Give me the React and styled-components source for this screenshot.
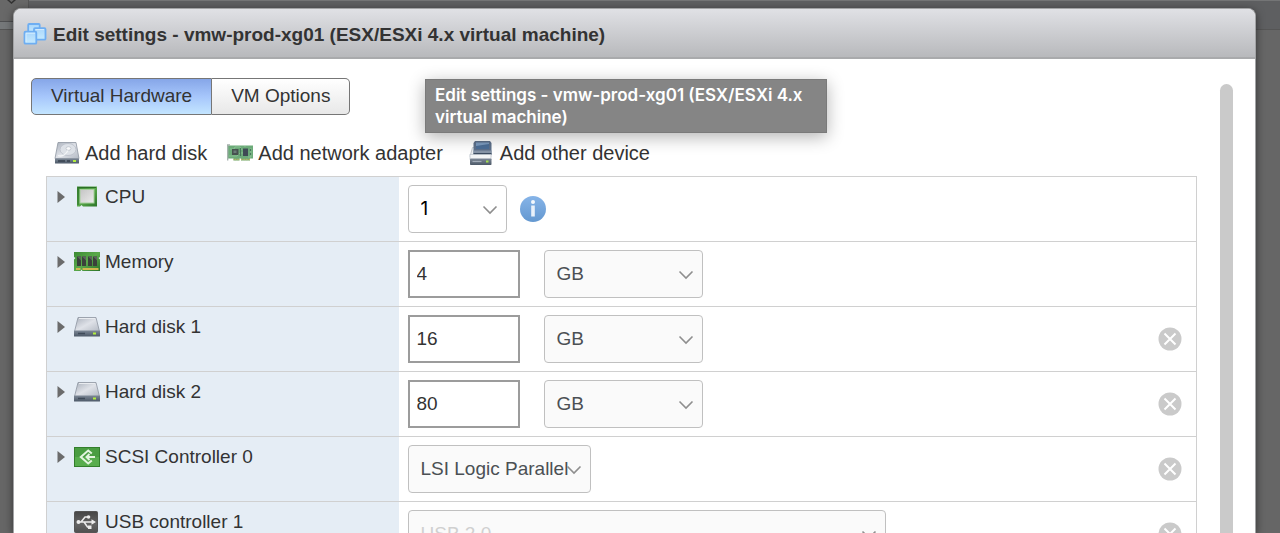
import React, { useState } from 'react'
import styled, { createGlobalStyle } from 'styled-components'

const devices = [
  { id: 'cpu', name: 'CPU', icon: 'cpu', expandable: true, kind: 'cpu' },
  { id: 'memory', name: 'Memory', icon: 'memory', expandable: true, kind: 'size', size: '4' },
  { id: 'disk1', name: 'Hard disk 1', icon: 'disk', expandable: true, kind: 'size', size: '16', removable: true },
  { id: 'disk2', name: 'Hard disk 2', icon: 'disk', expandable: true, kind: 'size', size: '80', removable: true },
  { id: 'scsi', name: 'SCSI Controller 0', icon: 'scsi', expandable: true, kind: 'scsi', removable: true },
  { id: 'usb', name: 'USB controller 1', icon: 'usb', expandable: false, kind: 'usb', removable: true },
]

const title = 'Edit settings - vmw-prod-xg01 (ESX/ESXi 4.x virtual machine)'

function Gradients() {
  return (
    <HiddenSvg aria-hidden='true'>
      <defs>
        <linearGradient id='silver' x1='0' y1='0' x2='1' y2='1'>
          <stop offset='0' stopColor='#a9b0bb' />
          <stop offset='0.5' stopColor='#dfe2e8' />
          <stop offset='1' stopColor='#b4bac4' />
        </linearGradient>
        <linearGradient id='steel' x1='0' y1='0' x2='0' y2='1'>
          <stop offset='0' stopColor='#7d8896' />
          <stop offset='1' stopColor='#4d5968' />
        </linearGradient>
        <linearGradient id='green' x1='0' y1='0' x2='1' y2='1'>
          <stop offset='0' stopColor='#3c8a33' />
          <stop offset='0.5' stopColor='#5aa94b' />
          <stop offset='1' stopColor='#2c7428' />
        </linearGradient>
        <linearGradient id='blue' x1='0' y1='0' x2='0' y2='1'>
          <stop offset='0' stopColor='#86b4e8' />
          <stop offset='1' stopColor='#6498d0' />
        </linearGradient>
        <linearGradient id='pane' x1='0' y1='0' x2='0' y2='1'>
          <stop offset='0' stopColor='#a9d6fb' />
          <stop offset='1' stopColor='#c6eafe' />
        </linearGradient>
        <linearGradient id='chip' x1='0' y1='0' x2='1' y2='1'>
          <stop offset='0' stopColor='#c4c4c4' />
          <stop offset='1' stopColor='#ececec' />
        </linearGradient>
        <linearGradient id='dark' x1='0' y1='0' x2='0' y2='1'>
          <stop offset='0' stopColor='#454545' />
          <stop offset='0.6' stopColor='#646464' />
          <stop offset='1' stopColor='#505050' />
        </linearGradient>
      </defs>
    </HiddenSvg>
  )
}

function VmIcon() {
  return (
    <svg width='24' height='24' viewBox='0 0 24 24' aria-hidden='true'>
      <g fill='url(#pane)' stroke='#6eaef2' strokeWidth='1.8'>
        <rect x='5.2' y='2' width='11.5' height='10' rx='1' />
        <rect x='11' y='6.2' width='11.5' height='11.5' rx='1' />
        <rect x='1.5' y='9.7' width='11.8' height='12' rx='1' />
      </g>
      <path d='M12.500 7.600h8.500M3 11.200h9M3 11.200v9' stroke='#dff2ff' strokeWidth='0.8' fill='none' />
    </svg>
  )
}

function AddDiskIcon() {
  return (
    <svg width='26' height='24' viewBox='0 0 26 24' aria-hidden='true'>
      <path d='M4 1.5h18l3 16H1z' fill='url(#silver)' stroke='#8e96a1' strokeWidth='0.8' />
      <ellipse cx='14' cy='8.500' rx='8' ry='6' fill='#dde1e7' stroke='#b7bdc6' strokeWidth='0.8' />
      <ellipse cx='14.5' cy='7.500' rx='2.5' ry='1.8' fill='#f9fafb' stroke='#b7bdc6' strokeWidth='0.7' />
      <path d='M4 14.500c4 1.500 7 0 10-5' stroke='#f4f6f8' strokeWidth='1.3' fill='none' />
      <rect x='1' y='17.5' width='24' height='5' rx='0.6' fill='url(#steel)' />
      <path d='M4 20h7M13 20h3' stroke='#37424f' strokeWidth='1.6' />
      <rect x='19' y='19' width='3' height='2' fill='#b2ee3d' />
    </svg>
  )
}

function NetworkIcon() {
  return (
    <svg width='26' height='24' viewBox='0 0 26 24' aria-hidden='true'>
      <path d='M1 4.5h25v13h-3v2h-9v-2h-1.500v2h-6v-2H1z' fill='#6cab79' />
      <path d='M0 4h3M0.700 4v15.500' stroke='#a4b0ab' strokeWidth='1.3' fill='none' />
      <path d='M3 8h4l1-2h5l2 3M2 15h8l3 -3h3M18 6v-1M21 16h3V7' stroke='#93c79b' strokeWidth='0.8' fill='none' />
      <rect x='5' y='8' width='6.500' height='6' fill='#46524f' />
      <rect x='6.500' y='9.500' width='3' height='2.500' fill='#6c7a79' />
      <rect x='16' y='7.500' width='5' height='7.500' fill='#3f4b55' />
      <path d='M13.500 7v8M23.500 8v2M23.500 12v2' stroke='#47775a' strokeWidth='1.2' />
      <path d='M6.500 18.500h6M14 18.500h9' stroke='#bdb765' strokeWidth='1.6' strokeDasharray='1 0.600' />
    </svg>
  )
}

function OtherDeviceIcon() {
  return (
    <svg width='32' height='26' viewBox='0 0 32 26' aria-hidden='true'>
      <path d='M9.500 7.500h16l2.500 9H7z' fill='#edf0f2' stroke='#b5bbc3' strokeWidth='0.800' />
      <path d='M12 1h15l1.500 2v12h-18V3z' fill='#5d708a' />
      <path d='M13 2.500h13v6.500h-13z' fill='#7c9bbf' />
      <path d='M13 6l13 -2v5h-13z' fill='#4b6d96' />
      <path d='M10.500 10.500h18V13h-18z' fill='#8795a7' />
      <path d='M10.500 13h18v1.500h-18z' fill='#3d4d61' />
      <rect x='7' y='14.500' width='21' height='5' fill='#f3f5f6' stroke='#bcc3cb' strokeWidth='0.700' />
      <rect x='7' y='18.500' width='21.500' height='6.500' rx='0.800' fill='url(#steel)' />
      <path d='M9.500 21.500h9' stroke='#a2acb8' strokeWidth='1.200' />
      <rect x='23' y='20.500' width='2.500' height='2' fill='#a4df4f' />
    </svg>
  )
}

const deviceIcons = {
  cpu: (
    <>
      <path d='M3 1.5h20v20h-14l-1.500-1.500-1.500 1.500H3z' fill='url(#green)' />
      <path d='M4 20V2.500h18' stroke='#2b6f26' fill='none' />
      <rect x='6' y='4.500' width='14' height='13.500' fill='url(#chip)' stroke='#a5cf9b' />
    </>
  ),
  memory: (
    <>
      <path
        d='M0 2h26v5l-1.500 1 1.500 1.500v11.500H8.500l-1-1.500-1 1.500H0v-11.500l1.500-1.500L0 7z'
        fill='url(#green)'
      />
      <path d='M3 6.500h4v9.500H3zM8 6.500h4v9.500H8zM14 6.500h4v9.500h-4zM19 6.500h4v9.500h-4z' fill='#3a413b' />
      <path d='M3 6.500l4 4v-4zM8 6.500l4 4v-4zM14 6.500l4 4v-4zM19 6.500l4 4v-4z' fill='#5c625d' />
      <path d='M2 19h4.500M8.500 19h16' stroke='#d0b650' strokeWidth='1.800' />
    </>
  ),
  disk: (
    <>
      <path d='M4 2.500h18l3.500 14H0.500z' fill='url(#silver)' stroke='#8e96a1' strokeWidth='0.800' />
      <path d='M5 3.500h16' stroke='#e9ecf0' />
      <rect x='0' y='15.500' width='26' height='6' rx='0.600' fill='url(#steel)' />
      <path d='M4 18.500h7' stroke='#3f4b59' strokeWidth='1.500' />
      <rect x='19' y='17.500' width='3' height='2' fill='#b2ee3d' />
    </>
  ),
  scsi: (
    <>
      <rect x='0.500' y='2.500' width='25' height='19' fill='#58ad4d' stroke='#337f2c' />
      <path d='M1 3h24v9H1z' fill='#4a9d41' />
      <path
        d='M17.800 8.500L14.200 5.500 6.800 12l7.400 6.500 3.600-3M21 12h-8M15.500 9L12.500 12l3 3'
        fill='none'
        stroke='#e4f4df'
        strokeWidth='2'
      />
    </>
  ),
  usb: (
    <>
      <rect x='0.500' y='1.500' width='23' height='21' rx='1' fill='url(#dark)' stroke='#555' />
      <path
        d='M4 12h15M7 12l4-5h3.500M10 12l3.500 5h3'
        fill='none'
        stroke='#ececec'
        strokeWidth='1.500'
      />
      <circle cx='4.500' cy='12' r='2' fill='#ececec' />
      <circle cx='14.500' cy='7' r='1.800' fill='#ececec' />
      <path d='M17.500 9.200L22 12l-4.500 2.800zM14 15.500h3.500V19H14z' fill='#ececec' />
    </>
  ),
}

function InfoIcon() {
  return (
    <svg width='28' height='28' viewBox='0 0 28 28' aria-hidden='true'>
      <circle cx='14' cy='14' r='13' fill='url(#blue)' />
      <circle cx='14' cy='7' r='2' fill='#f4f8fd' />
      <rect x='12.200' y='10.500' width='3.600' height='11' fill='#e9f1fa' />
    </svg>
  )
}

function SelectBox({ options, ...props }) {
  return (
    <SelectWrap $width={props.$width}>
      <Select {...props}>
        {options.map((option) => (
          <option key={option}>{option}</option>
        ))}
      </Select>
      <Chevron viewBox='0 0 16 10' aria-hidden='true'>
        <path d='M1.500 1.500L8 8l6.500-6.500' fill='none' stroke='#8e8e8e' strokeWidth='1.600' />
      </Chevron>
    </SelectWrap>
  )
}

function DeviceControls({ device }) {
  if (device.kind === 'cpu') {
    return (
      <>
        <SelectBox $width='99px' $plain aria-label='CPU' options={['1', '2', '4', '8']} />
        <InfoButton type='button' aria-label='CPU information'>
          <InfoIcon />
        </InfoButton>
      </>
    )
  }
  if (device.kind === 'size') {
    return (
      <>
        <SizeInput type='text' aria-label={device.name} defaultValue={device.size} />
        <SelectBox
          $width='159px'
          aria-label={`${device.name} unit`}
          defaultValue='GB'
          options={['MB', 'GB', 'TB']}
        />
      </>
    )
  }
  if (device.kind === 'scsi') {
    return (
      <SelectBox
        $width='183px'
        aria-label={device.name}
        options={['LSI Logic Parallel', 'LSI Logic SAS', 'BusLogic Parallel']}
      />
    )
  }
  return <SelectBox $width='478px' disabled aria-label={device.name} options={['USB 2.0']} />
}

export default function App() {
  const [tab, setTab] = useState('hardware')
  return (
    <Backdrop>
      <GlobalStyle />
      <Gradients />
      <BackdropCorner>
        <svg width='12' height='6' viewBox='0 0 12 6' aria-hidden='true'>
          <path d='M1-1l4.500 4L10-1' fill='none' stroke='#333' strokeWidth='1.500' />
        </svg>
      </BackdropCorner>
      <Dialog role='dialog' aria-labelledby='dialog-title'>
        <Header>
          <VmIcon />
          <Title id='dialog-title'>{title}</Title>
          <Tooltip role='tooltip'>{title}</Tooltip>
        </Header>
        <Body>
          <Content>
            <Tabs role='tablist'>
              <Tab
                type='button'
                role='tab'
                aria-selected={tab === 'hardware'}
                $active={tab === 'hardware'}
                onClick={() => setTab('hardware')}
              >
                Virtual Hardware
              </Tab>
              <Tab
                type='button'
                role='tab'
                aria-selected={tab === 'options'}
                $active={tab === 'options'}
                onClick={() => setTab('options')}
              >
                VM Options
              </Tab>
            </Tabs>
            <Toolbar>
              <ToolButton type='button'>
                <AddDiskIcon />
                Add hard disk
              </ToolButton>
              <ToolButton type='button'>
                <NetworkIcon />
                Add network adapter
              </ToolButton>
              <ToolButton type='button'>
                <OtherDeviceIcon />
                Add other device
              </ToolButton>
            </Toolbar>
            <DeviceTable>
              <tbody>
                {devices.map((device) => (
                  <tr key={device.id}>
                    <NameCell scope='row'>
                      <Name>
                        <Expander
                          type='button'
                          aria-label={`Expand ${device.name}`}
                          $hidden={!device.expandable}
                        >
                          <svg width='8' height='12' viewBox='0 0 8 12' aria-hidden='true'>
                            <path d='M0.500 0L8 6l-7.500 6z' fill='#6b6b6b' />
                          </svg>
                        </Expander>
                        <svg width='26' height='24' viewBox='0 0 26 24' aria-hidden='true'>
                          {deviceIcons[device.icon]}
                        </svg>
                        {device.name}
                      </Name>
                    </NameCell>
                    <ValueCell>
                      <Controls>
                        <DeviceControls device={device} />
                        {device.removable && (
                          <RemoveButton type='button' aria-label={`Remove ${device.name}`}>
                            <svg width='24' height='24' viewBox='0 0 24 24' aria-hidden='true'>
                              <circle cx='12' cy='12' r='11.500' fill='#cacaca' />
                              <path d='M6.500 6.500l11 11M17.500 6.500l-11 11' stroke='#fff' strokeWidth='2' />
                            </svg>
                          </RemoveButton>
                        )}
                      </Controls>
                    </ValueCell>
                  </tr>
                ))}
              </tbody>
            </DeviceTable>
          </Content>
          <ScrollThumb />
        </Body>
      </Dialog>
    </Backdrop>
  )
}

const GlobalStyle = createGlobalStyle`
  * {
    box-sizing: border-box;
  }
  body {
    margin: 0;
    font-family: 'Liberation Sans', Arial, sans-serif;
    font-size: 19px;
    line-height: 24px;
    color: #333;
  }
  button,
  input,
  select {
    font: inherit;
    color: inherit;
  }
  button {
    padding: 0;
    border: 0;
    background: none;
    cursor: pointer;
  }
  svg {
    display: block;
    flex: none;
  }
`

const HiddenSvg = styled.svg`
  position: absolute;
  width: 0;
  height: 0;
`

const Backdrop = styled.div`
  position: relative;
  display: flex;
  height: 100vh;
  overflow: hidden;
  padding: 8px 24px 0 13px;
  background: linear-gradient(#747576 1px, #5e5f61 1px, #5e5f61 29px, #555 29px, #555 30px, #666 30px);
`

const BackdropCorner = styled.div`
  position: absolute;
  top: 0;
  left: 0;
  width: 29px;
  height: 30px;
  padding-left: 6px;
  border-right: 1px solid #555;
  background: linear-gradient(#686868 21px, #4f5052 21px, #4f5052 22px, #75787a 22px, #75787a 29px, #555 29px);
`

const Dialog = styled.section`
  position: relative;
  flex: 1;
  display: flex;
  flex-direction: column;
  min-width: 0;
  border: 1px solid #a2a3a5;
  border-bottom: 0;
  border-radius: 8px 8px 0 0;
  background: #fff;
  box-shadow: 0 2px 8px rgba(0, 0, 0, 0.5);
`

const Header = styled.header`
  position: relative;
  flex: none;
  display: flex;
  align-items: center;
  gap: 6px;
  height: 50px;
  padding: 1px 9px 0;
  border-bottom: 2px solid #a9aaac;
  border-radius: 7px 7px 0 0;
  background: linear-gradient(#e0e1e5, #b8b9bc);
`

const Title = styled.h1`
  margin: 0;
  padding-top: 2px;
  font-size: 19px;
  line-height: 24px;
  font-weight: 700;
`

const Tooltip = styled.div`
  position: absolute;
  z-index: 1;
  top: 70px;
  left: 411px;
  width: 402px;
  padding: 4px 9px;
  border: 1px solid #7a7a7a;
  background: #858585;
  box-shadow: 0 4px 16px rgba(0, 0, 0, 0.3);
  color: #fff;
  font-family: Inter, sans-serif;
  font-size: 17px;
  line-height: 22px;
  font-weight: 600;
`

const Body = styled.div`
  flex: 1;
  display: flex;
  min-height: 0;
  padding: 19px 22px 0 17px;
`

const Content = styled.div`
  flex: 1;
  min-width: 0;
`

const Tabs = styled.div`
  display: flex;
`

const Tab = styled.button`
  height: 37px;
  padding: 0 19px 2px;
  border: 1px solid #767676;
  background: ${(props) =>
    props.$active ? 'linear-gradient(#86a6e8, #a6c6fb 50%, #c3e5ff)' : 'linear-gradient(#fff, #e8e8e8)'};

  &:first-child {
    border-radius: 5px 0 0 5px;
  }
  &:last-child {
    border-left: 0;
    border-radius: 0 5px 5px 0;
  }
`

const Toolbar = styled.div`
  display: flex;
  align-items: center;
  gap: 20px;
  height: 61px;
  padding: 14px 0 0 23px;
`

const ToolButton = styled.button`
  display: flex;
  align-items: center;
  gap: 5px;
  font-size: 20px;
  white-space: nowrap;
`

const DeviceTable = styled.table`
  width: calc(100% - 38px);
  margin-left: 15px;
  border-collapse: collapse;
  border: 1px solid #d0d0d0;

  tr {
    height: 65px;
    border-bottom: 1px solid #d0d0d0;
  }
`

const NameCell = styled.th`
  width: 352px;
  padding: 8px 10px;
  background: #e5edf5;
  font-weight: 400;
  text-align: left;
  vertical-align: top;
`

const Name = styled.div`
  display: flex;
  align-items: center;
  gap: 5px;
`

const Expander = styled.button`
  width: 12px;
  visibility: ${(props) => (props.$hidden ? 'hidden' : 'visible')};
`

const ValueCell = styled.td`
  padding: 8px 14px 8px 9px;
`

const Controls = styled.div`
  display: flex;
  align-items: center;
`

const SelectWrap = styled.span`
  position: relative;
  width: ${(props) => props.$width};
`

const Select = styled.select`
  display: block;
  width: 100%;
  height: 48px;
  padding: 0 12px;
  border: 1px solid #c0c0c0;
  border-radius: 4px;
  appearance: none;
  background: ${(props) => (props.$plain ? '#fff' : '#fafafa')};
  color: ${(props) => (props.$plain ? '#000' : '#4b5054')};
  font-family: ${(props) => (props.$plain ? 'Inter, sans-serif' : 'inherit')};

  &:disabled {
    color: #d0d0d0;
    opacity: 1;
  }
`

const Chevron = styled.svg`
  position: absolute;
  right: 9px;
  top: 20px;
  width: 16px;
  height: 10px;
  pointer-events: none;
`

const InfoButton = styled.button`
  margin-left: 12px;
`

const SizeInput = styled.input`
  width: 112px;
  height: 48px;
  margin-right: 24px;
  padding: 0 7px;
  border: 2px solid #9c9c9c;
  border-radius: 0;
  background: #fff;
`

const RemoveButton = styled.button`
  margin-left: auto;
`

const ScrollThumb = styled.div`
  width: 13px;
  margin-top: 6px;
  border-radius: 7px 7px 0 0;
  background: #cacaca;
`
